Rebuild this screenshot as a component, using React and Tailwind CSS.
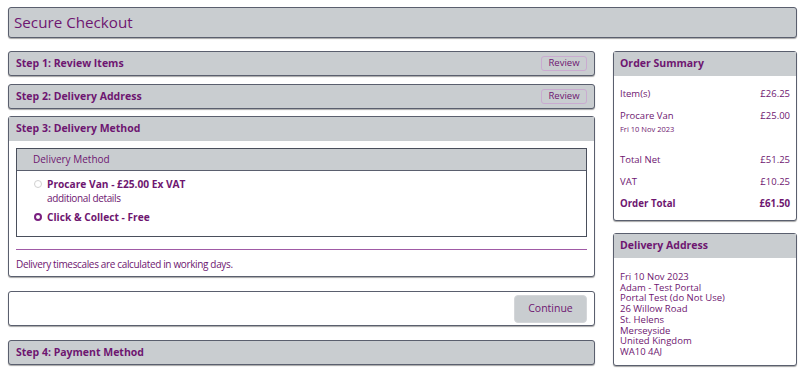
import React from "react";

const panel = "border border-[#5a5f6e] rounded-[3px] shadow-[0_1px_1px_rgba(0,0,0,0.35)]";

function StepBar({ title, review }) {
  return (
    <div className={`${panel} bg-[#c9cdd0] h-[25px] flex items-center justify-between pl-[7px] pr-[7px]`}>
      <span className="text-[10.5px] font-bold text-[#6e1670]">{title}</span>
      {review && (
        <span className="h-[15px] w-[46px] flex items-center justify-center text-[9.5px] text-[#6e1670] border border-[#c9abd0] rounded-[3px] bg-[#c9cdd0]">
          Review
        </span>
      )}
    </div>
  );
}

function Row({ label, value, bold }) {
  return (
    <div className={`flex justify-between leading-[13px] ${bold ? "font-bold text-[9.7px]" : "text-[9.5px]"}`}>
      <span>{label}</span>
      <span>{value}</span>
    </div>
  );
}

export default function App() {
  return (
    <div className="w-[805px] h-[376px] bg-white px-[8px] pt-[7px] text-[#6e1670]" style={{ fontFamily: '"Open Sans", "Noto Sans", sans-serif' }}>
      <div className={`${panel} bg-[#c9cdd0] h-[31px] flex items-center pl-[5px]`}>
        <h1 className="text-[15.2px] leading-none">Secure Checkout</h1>
      </div>

      <div className="flex gap-[18px] mt-[13px]">
        {/* Left column */}
        <div className="w-[587px] flex flex-col">
          <StepBar title="Step 1: Review Items" review />
          <div className="h-[8px]" />
          <StepBar title="Step 2: Delivery Address" review />
          <div className="h-[7px]" />

          <div className={`${panel} bg-white`}>
            <div className="bg-[#c9cdd0] h-[24px] flex items-center pl-[7px]">
              <span className="text-[10.5px] font-bold">Step 3: Delivery Method</span>
            </div>
            <div className="px-[7px] pt-[7px] pb-[5px]">
              <div className="border border-[#4a4f5c] h-[89px]">
                <div className="bg-[#c9cdd0] h-[22px] flex items-center pl-[16px] border-b border-[#5a5f6e]">
                  <span className="text-[10px]">Delivery Method</span>
                </div>
                <div className="pl-[17px] pt-[6px]">
                  <div className="flex items-start gap-[5px]">
                    <span className="mt-[3px] w-[8px] h-[8px] rounded-full border border-[#d0d0d0] bg-white" />
                    <div>
                      <div className="text-[10.2px] font-bold leading-[14px]">Procare Van - £25.00 Ex VAT</div>
                      <div className="text-[10px] tracking-[-0.35px] leading-[14px]">additional details</div>
                    </div>
                  </div>
                  <div className="flex items-center gap-[5px] mt-[5px]">
                    <span className="w-[8px] h-[8px] rounded-full border-[2.5px] border-[#7a2080] bg-white" />
                    <span className="text-[10.2px] font-bold leading-[14px]">Click &amp; Collect - Free</span>
                  </div>
                </div>
              </div>
              <div className="mt-[12px] border-t border-[#a05aa6]" />
              <div className="text-[10px] tracking-[-0.35px] leading-[13px] mt-[8px]">Delivery timescales are calculated in working days.</div>
            </div>
          </div>

          <div className="h-[14px]" />
          <div className={`${panel} bg-white h-[35px] flex items-center justify-end pr-[7px]`}>
            <button className="h-[28px] w-[73px] rounded-[4px] bg-[#c9cdd0] border border-[#d4d6d9] text-[10.5px] text-[#6e1670]">
              Continue
            </button>
          </div>
          <div className="h-[14px]" />
          <StepBar title="Step 4: Payment Method" />
        </div>

        {/* Right column */}
        <div className="w-[184px] flex flex-col">
          <div className={`${panel} bg-white h-[170px]`}>
            <div className="bg-[#c9cdd0] h-[24px] flex items-center pl-[6px]">
              <span className="text-[10.5px] font-bold">Order Summary</span>
            </div>
            <div className="px-[6px] pt-[11px]">
              <Row label="Item(s)" value="£26.25" />
              <div className="mt-[9px]">
                <Row label="Procare Van" value="£25.00" />
                <div className="text-[7.5px] leading-[10px] mt-[2px]">Fri 10 Nov 2023</div>
              </div>
              <div className="mt-[19px]">
                <Row label="Total Net" value="£51.25" />
              </div>
              <div className="mt-[9px]">
                <Row label="VAT" value="£10.25" />
              </div>
              <div className="mt-[9px]">
                <Row label="Order Total" value="£61.50" bold />
              </div>
            </div>
          </div>

          <div className="h-[12px]" />
          <div className={`${panel} bg-white h-[133px]`}>
            <div className="bg-[#c9cdd0] h-[24px] flex items-center pl-[6px]">
              <span className="text-[10.5px] font-bold">Delivery Address</span>
            </div>
            <div className="px-[6px] pt-[14px] text-[9.5px] leading-[10.7px]">
              <div>Fri 10 Nov 2023</div>
              <div>Adam - Test Portal</div>
              <div>Portal Test (do Not Use)</div>
              <div>26 Willow Road</div>
              <div>St. Helens</div>
              <div>Merseyside</div>
              <div>United Kingdom</div>
              <div>WA10 4AJ</div>
            </div>
          </div>
        </div>
      </div>
    </div>
  );
}
